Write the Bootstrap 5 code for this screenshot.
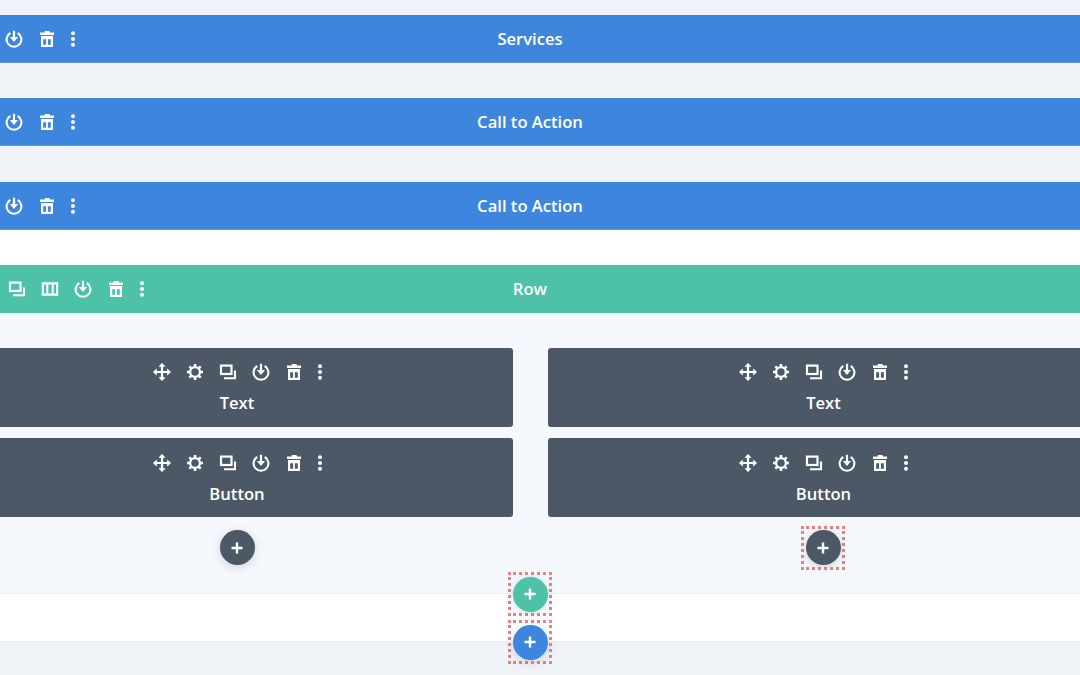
<!DOCTYPE html>
<html lang="en">
<head>
<meta charset="utf-8">
<title>Builder wireframe</title>
<link href="https://cdn.jsdelivr.net/npm/bootstrap@5.3.0/dist/css/bootstrap.min.css" rel="stylesheet">
<style>
html,body{height:675px;overflow:hidden;background:#eff2f7}
body{font-family:"Open Sans",sans-serif;color:#fff}
.canvas{width:1140px;margin-left:-40px;position:relative;height:675px}
.band-grey{background:#f0f3f8;padding:15px 0 0}
.band-grey .strip+.strip{margin-top:35px}
.band-grey .strip:last-child{margin-top:36px}
.strip{height:48px;display:grid;grid-template-columns:1fr auto 1fr;align-items:center;font-size:16.6px;font-weight:600;line-height:24px}
.strip-blue{background:#3e86dd;box-shadow:inset 0 -1px 0 #5a97e1}
.strip-green{background:#4dc2a8}
.pad-sec{padding-left:37px}
.pad-row{padding-left:40px}
.gap-white{height:35px;background:#fff}
.tools{display:flex;align-items:center}
.tools .tool{width:33px;height:18px;display:flex;justify-content:center;flex:none}
.tools .tool-dots{width:19px;height:18px;display:flex;justify-content:center;flex:none}
.tool svg,.tool-dots svg{width:18px;height:18px;display:block}
.panel{background:#f5f8fc;height:280px;padding:35px 1px 0;display:grid;grid-template-columns:552px 552px;column-gap:34.5px;justify-content:start}
.mod{height:79px;background:#4c5866;border-radius:3px;padding-top:15px;display:flex;flex-direction:column;align-items:center;font-size:16.6px;font-weight:600;line-height:24px}
.mod+.mod{margin-top:11px;padding-top:16px}
.mod .lbl{margin-top:10px}
.add{width:35px;height:35px;border-radius:50%;display:flex;align-items:center;justify-content:center;box-shadow:0 2px 10px rgba(43,58,80,.18)}
.add svg{width:14px;height:14px;display:block}
.add-dark{background:#4c5866}
.add-green{background:#4dc2a8}
.add-blue{background:#3e86dd}
.add-slot{display:flex;justify-content:center;margin-top:13px}
.dots-box{border:3px dotted #ea8084;padding:1.5px;display:inline-block;line-height:0}
.add-slot .dots-box{margin-top:-4.5px;margin-bottom:-4.5px;margin-left:-1px}
.band-white{height:49px;background:#fff;border-top:1px solid #edf0f5;border-bottom:1px solid #e9edf3}
.band-end{background:#eff2f7;height:33px}
.floaters{position:absolute;left:548px;top:572px;display:flex;flex-direction:column;gap:4px}
</style>
</head>
<body>
<svg width="0" height="0" class="position-absolute" aria-hidden="true">
<defs>
<symbol id="i-pow" viewBox="0 0 18 18"><path d="M5.300 3A7.400 7.400 0 1 0 12.700 3" fill="none" stroke="#fff" stroke-width="2.100"/><path d="M7.900 .8h2.200v6.200h3L9 12 4.900 7h3z" fill="#fff"/></symbol>
<symbol id="i-bin" viewBox="0 0 18 18"><path d="M6.600 1h4.800l.7 1.600H16v2.300H2V2.600h4.900z" fill="#fff"/><path fill-rule="evenodd" d="M3 6.100h12V17H3zM5.200 9.300v5.400h2.900V9.300zM9.900 9.300v5.400h2.900V9.300z" fill="#fff"/></symbol>
<symbol id="i-more" viewBox="0 0 18 18"><circle cx="9" cy="3.300" r="2" fill="#fff"/><circle cx="9" cy="9" r="2" fill="#fff"/><circle cx="9" cy="14.700" r="2" fill="#fff"/></symbol>
<symbol id="i-dup" viewBox="0 0 18 18"><rect x="2" y="2.600" width="10.500" height="8.400" fill="none" stroke="#fff" stroke-width="2.200"/><path d="M16 7.500V15.200H5" fill="none" stroke="#fff" stroke-width="2.100"/></symbol>
<symbol id="i-cols" viewBox="0 0 18 18"><path fill-rule="evenodd" d="M.8 2.300h16.400v13.400H.8zM2.900 4.400v9.200h2.400V4.400zM7.300 4.400v9.200h3.400V4.400zM12.700 4.400v9.200h2.400V4.400z" fill="#fff"/></symbol>
<symbol id="i-move" viewBox="0 0 18 18"><path d="M9 2.500v13M2.500 9h13" stroke="#fff" stroke-width="2.200" fill="none"/><path d="M9 .3l3 3.300H6zM9 17.700l3-3.300H6zM.3 9l3.300-3v6zM17.700 9l-3.300-3v6z" fill="#fff" stroke="#fff" stroke-width=".6" stroke-linejoin="round"/></symbol>
<symbol id="i-gear" viewBox="0 0 18 18"><circle cx="9" cy="9" r="4.900" fill="none" stroke="#fff" stroke-width="2.300"/><path d="M9 1v3M9 14v3M1 9h3M14 9h3M3.300 3.300l2.200 2.200M12.500 12.500l2.200 2.200M14.700 3.300l-2.200 2.200M5.500 12.500l-2.200 2.200" stroke="#fff" stroke-width="2.500" fill="none"/></symbol>
<symbol id="i-plus" viewBox="0 0 14 14"><path d="M7 1.500v11M1.500 7h11" stroke="#fff" stroke-width="2.400" fill="none"/></symbol>
</defs>
</svg>
<div class="canvas">
  <div class="band-grey">
    <div class="strip strip-blue">
      <div class="tools pad-sec"><span class="tool"><svg><use href="#i-pow"/></svg></span><span class="tool"><svg><use href="#i-bin"/></svg></span><span class="tool-dots"><svg><use href="#i-more"/></svg></span></div>
      <div>Services</div><div></div>
    </div>
    <div class="strip strip-blue">
      <div class="tools pad-sec"><span class="tool"><svg><use href="#i-pow"/></svg></span><span class="tool"><svg><use href="#i-bin"/></svg></span><span class="tool-dots"><svg><use href="#i-more"/></svg></span></div>
      <div>Call to Action</div><div></div>
    </div>
    <div class="strip strip-blue">
      <div class="tools pad-sec"><span class="tool"><svg><use href="#i-pow"/></svg></span><span class="tool"><svg><use href="#i-bin"/></svg></span><span class="tool-dots"><svg><use href="#i-more"/></svg></span></div>
      <div>Call to Action</div><div></div>
    </div>
  </div>
  <div class="gap-white"></div>
  <div class="strip strip-green">
    <div class="tools pad-row"><span class="tool"><svg><use href="#i-dup"/></svg></span><span class="tool"><svg><use href="#i-cols"/></svg></span><span class="tool"><svg><use href="#i-pow"/></svg></span><span class="tool"><svg><use href="#i-bin"/></svg></span><span class="tool-dots"><svg><use href="#i-more"/></svg></span></div>
    <div>Row</div><div></div>
  </div>
  <div class="panel">
    <div>
      <div class="mod"><div class="tools"><span class="tool"><svg><use href="#i-move"/></svg></span><span class="tool"><svg><use href="#i-gear"/></svg></span><span class="tool"><svg><use href="#i-dup"/></svg></span><span class="tool"><svg><use href="#i-pow"/></svg></span><span class="tool"><svg><use href="#i-bin"/></svg></span><span class="tool-dots"><svg><use href="#i-more"/></svg></span></div><div class="lbl">Text</div></div>
      <div class="mod"><div class="tools"><span class="tool"><svg><use href="#i-move"/></svg></span><span class="tool"><svg><use href="#i-gear"/></svg></span><span class="tool"><svg><use href="#i-dup"/></svg></span><span class="tool"><svg><use href="#i-pow"/></svg></span><span class="tool"><svg><use href="#i-bin"/></svg></span><span class="tool-dots"><svg><use href="#i-more"/></svg></span></div><div class="lbl">Button</div></div>
      <div class="add-slot"><span class="add add-dark"><svg><use href="#i-plus"/></svg></span></div>
    </div>
    <div>
      <div class="mod"><div class="tools"><span class="tool"><svg><use href="#i-move"/></svg></span><span class="tool"><svg><use href="#i-gear"/></svg></span><span class="tool"><svg><use href="#i-dup"/></svg></span><span class="tool"><svg><use href="#i-pow"/></svg></span><span class="tool"><svg><use href="#i-bin"/></svg></span><span class="tool-dots"><svg><use href="#i-more"/></svg></span></div><div class="lbl">Text</div></div>
      <div class="mod"><div class="tools"><span class="tool"><svg><use href="#i-move"/></svg></span><span class="tool"><svg><use href="#i-gear"/></svg></span><span class="tool"><svg><use href="#i-dup"/></svg></span><span class="tool"><svg><use href="#i-pow"/></svg></span><span class="tool"><svg><use href="#i-bin"/></svg></span><span class="tool-dots"><svg><use href="#i-more"/></svg></span></div><div class="lbl">Button</div></div>
      <div class="add-slot"><span class="dots-box"><span class="add add-dark"><svg><use href="#i-plus"/></svg></span></span></div>
    </div>
  </div>
  <div class="band-white"></div>
  <div class="band-end"></div>
  <div class="floaters">
    <span class="dots-box"><span class="add add-green"><svg><use href="#i-plus"/></svg></span></span>
    <span class="dots-box"><span class="add add-blue"><svg><use href="#i-plus"/></svg></span></span>
  </div>
</div>
<script src="https://cdn.jsdelivr.net/npm/bootstrap@5.3.0/dist/js/bootstrap.bundle.min.js"></script>
</body>
</html>
